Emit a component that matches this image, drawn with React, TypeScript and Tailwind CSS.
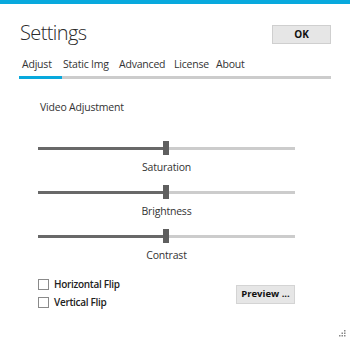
import React from "react";

const font = { fontFamily: '"Segoe UI", "Open Sans", "Noto Sans", sans-serif' };

function Slider({ label }: { label: string }) {
  return (
    <div className="flex flex-col">
      <div className="relative ml-[38px] w-[257px] h-[14px] flex items-center">
        <div className="h-[3px] w-[127px] bg-[#686868]" />
        <div className="h-[3px] flex-1 bg-[#cccccc]" />
        <div className="absolute left-[125px] top-0 h-[14px] w-[6px] bg-[#5f5f5f]" />
      </div>
      <div className="ml-[38px] w-[257px] text-center text-[10.5px] tracking-[-0.2px] leading-[16px] text-[#333] mt-[4px]">{label}</div>
    </div>
  );
}

function Check({ label }: { label: string }) {
  return (
    <div className="flex items-center h-[18px]">
      <div className="w-[11px] h-[11px] border border-[#8a8a8a] bg-white" />
      <span className="ml-[5px] text-[10px] tracking-[-0.3px] leading-[14px] font-semibold text-[#222]">{label}</span>
    </div>
  );
}

export default function App() {
  return (
    <div className="relative w-[350px] h-[341px] bg-white overflow-hidden flex flex-col" style={font}>
      <div className="h-[4px] bg-[#08a9dd]" />
      <div className="flex items-start justify-between pl-[20px] pr-[19px] mt-[15px]">
        <div className="text-[20px] tracking-[-0.6px] font-light leading-[28px] text-[#2a2a2a]">Settings</div>
        <button className="mt-[6px] w-[59px] h-[19px] bg-[#e6e6e6] border border-[#cfcfcf] text-[10px] font-bold text-[#111] flex items-center justify-center">OK</button>
      </div>
      <div className="mx-[19px] mt-[9px] flex flex-col">
        <div className="flex text-[10.5px] tracking-[-0.2px] text-[#333] leading-[16px]">
          <div className="w-[44px] pl-[3px]">Adjust</div>
          <div className="w-[56px]">Static Img</div>
          <div className="w-[55px]">Advanced</div>
          <div className="w-[42px]">License</div>
          <div>About</div>
        </div>
        <div className="flex mt-[4px] h-[3px]">
          <div className="w-[43px] bg-[#08a9dd]" />
          <div className="flex-1 bg-[#cccccc]" />
        </div>
      </div>
      <div className="ml-[40px] mt-[20px] text-[10.5px] tracking-[-0.2px] leading-[16px] text-[#333]">Video Adjustment</div>
      <div className="mt-[26px] flex flex-col gap-[10px]">
        <Slider label="Saturation" />
        <Slider label="Brightness" />
        <Slider label="Contrast" />
      </div>
      <div className="mt-[12px] flex pl-[38px] pr-[55px] justify-between">
        <div className="flex flex-col">
          <Check label="Horizontal Flip" />
          <Check label="Vertical Flip" />
        </div>
        <button className="mt-[10px] w-[59px] h-[19px] bg-[#e6e6e6] border border-[#d4d4d4] text-[9.5px] font-bold text-[#111] flex items-center justify-center">Preview ...</button>
      </div>
      <svg className="absolute right-[4px] bottom-[4px]" width="7" height="7" viewBox="0 0 7 7">
        <rect x="5" y="0" width="1.5" height="1.5" fill="#888" />
        <rect x="2.5" y="2.5" width="1.5" height="1.5" fill="#888" />
        <rect x="5" y="2.5" width="1.5" height="1.5" fill="#888" />
        <rect x="0" y="5" width="1.5" height="1.5" fill="#888" />
        <rect x="2.5" y="5" width="1.5" height="1.5" fill="#888" />
        <rect x="5" y="5" width="1.5" height="1.5" fill="#888" />
      </svg>
    </div>
  );
}
